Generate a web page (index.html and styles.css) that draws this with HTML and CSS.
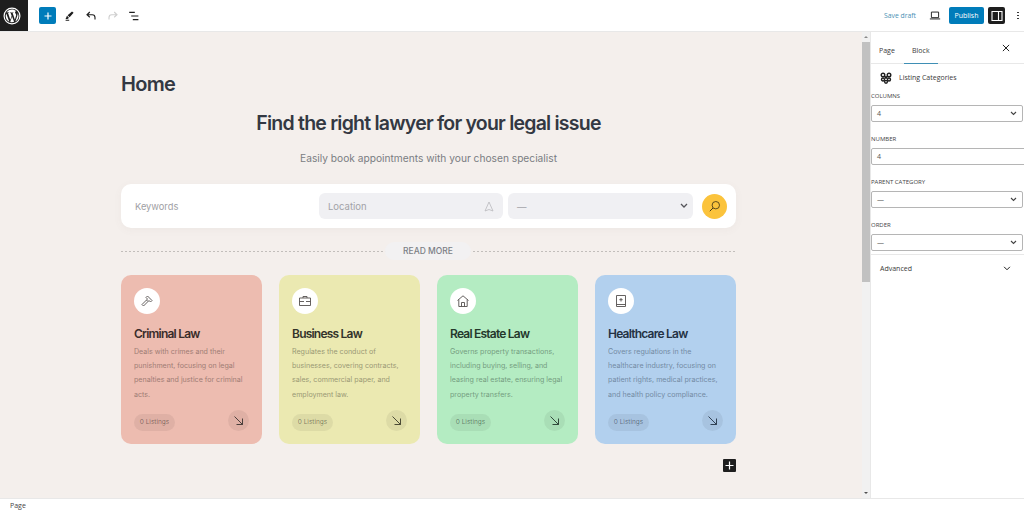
FILE: index.html
```html
<!DOCTYPE html>
<html lang="en">
<head>
    <meta charset="UTF-8">
    <title>Edit Page</title>
    <link rel="stylesheet" href="styles.css">
</head>
<body>
    <header class="topbar">
        <div class="wp-logo">
            <svg width="18" height="18" viewBox="0 0 20 20"><circle cx="10" cy="10" r="8.800" fill="none" stroke="#fff" stroke-width="1.300"/><path fill="#fff" d="M3 10c0 2.800 1.600 5.200 4 6.300L3.600 7.100C3.200 8 3 9 3 10zm11.700-.4c0-.9-.3-1.500-.6-2-.4-.6-.7-1.100-.7-1.700 0-.7.500-1.300 1.200-1.300h.1C13.500 3.500 11.800 2.800 10 2.800c-2.500 0-4.700 1.300-6 3.200h.5c.7 0 1.900-.1 1.900-.1.400 0 .4.500 0 .6 0 0-.4 0-.8.1l2.500 7.500 1.500-4.500-1.100-2.900c-.4 0-.7-.1-.7-.1-.4 0-.3-.6 0-.6 0 0 1.100.1 1.800.1s1.900-.1 1.900-.1c.4 0 .4.500 0 .6 0 0-.4 0-.8.1l2.500 7.400.7-2.300c.3-.9.500-1.600.500-2.100zM10.100 10.600l-2.100 6c.6.2 1.300.3 2 .3.800 0 1.600-.1 2.300-.4l-2.200-5.900zm6.100-4c0 .3.100.6.100 1 0 .7-.1 1.400-.5 2.400l-2.100 6.100c2.100-1.200 3.500-3.500 3.500-6.100 0-1.200-.3-2.400-1-3.400z"/></svg>
        </div>
        <div class="tools">
            <button class="add-btn">
                <svg width="14" height="14" viewBox="0 0 14 14"><path d="M7 3.500v7M3.500 7h7" stroke="#fff" stroke-width="1.200"/></svg>
            </button>
            <svg class="tool" width="16" height="16" viewBox="0 0 20 20"><path fill="#1e1e1e" d="M12.500 4.500 14.500 6l-5 5.500-2.500-2.500zM6.300 9.800l2.300 2.400c-.6 1.300-1.900 1.800-4.300 1.500 1.200-.9 1.100-2.900 2-3.900zM4.500 14.800h4.500v1H4.500z"/></svg>
            <svg class="tool" width="16" height="16" viewBox="0 0 20 20"><path fill="none" stroke="#1e1e1e" stroke-width="1.400" d="M8.500 5 5 8.500 8.500 11.500M5.500 8.500h6c2.200 0 3.500 1.500 3.500 3.500v2.500"/></svg>
            <svg class="tool" width="16" height="16" viewBox="0 0 20 20"><path fill="none" stroke="#cfcfcf" stroke-width="1.400" d="M11.500 5 15 8.500 11.500 11.500M14.500 8.500h-6C6.300 8.500 5 10 5 12v2.500"/></svg>
            <svg class="tool" width="16" height="16" viewBox="0 0 20 20"><path stroke="#1e1e1e" stroke-width="1.500" d="M4 5.500h7M6.500 10h9M8.500 14.500h7"/></svg>
        </div>
        <div class="actions">
            <span class="save-draft">Save draft</span>
            <svg class="preview" width="12" height="11" viewBox="0 0 14 12"><path fill="none" stroke="#1e1e1e" stroke-width="1.100" d="M2.800 2h8.400v6.500H2.800z"/><path stroke="#1e1e1e" stroke-width="1.100" d="M1 10h12"/></svg>
            <button class="publish">Publish</button>
            <button class="panel-btn">
                <svg width="12" height="12" viewBox="0 0 12 12"><path fill="none" stroke="#fff" stroke-width="1.100" d="M1 1.500h10v9H1zM7.500 1.500v9"/></svg>
            </button>
            <span class="more-dots"><i></i><i></i><i></i></span>
        </div>
    </header>

    <div class="workspace">
        <main class="canvas">
            <div class="page">
                <h1 class="page-title">Home</h1>
                <h2 class="hero-title">Find the right lawyer for your legal issue</h2>
                <p class="hero-sub">Easily book appointments with your chosen specialist</p>

                <div class="search">
                    <span class="keywords">Keywords</span>
                    <div class="field location">
                        <span>Location</span>
                        <svg width="10" height="11" viewBox="0 0 10 11"><path fill="none" stroke="#b9b9bd" stroke-width=".8" d="M5 1 1 10l4-1.500L9 10z"/></svg>
                    </div>
                    <div class="field category">
                        <span>—</span>
                        <svg width="8" height="6" viewBox="0 0 8 6"><path fill="none" stroke="#55555a" stroke-width="1.300" d="m1 1 3 3 3-3"/></svg>
                    </div>
                    <button class="search-btn">
                        <svg width="13" height="13" viewBox="0 0 13 13"><circle cx="7.800" cy="5.200" r="3.700" fill="none" stroke="#4a3c17" stroke-width=".9"/><path stroke="#4a3c17" stroke-width="1" d="M5 8 1.800 11.200"/></svg>
                    </button>
                </div>

                <div class="read-more"><span>READ MORE</span></div>

                <div class="cards">
                    <article class="card card-red">
                        <div class="card-icon">
                            <svg width="14" height="14" viewBox="0 0 14 14"><path fill="none" stroke="#55504f" stroke-width=".9" d="m7.500 2 4.500 4.500-1.500 1.500L9 6.500 8 7.500l-1.500-1.500 1-1-1.500-1.500zM6.500 6 2 10.500 3.500 12 8 7.500"/></svg>
                        </div>
                        <h3>Criminal Law</h3>
                        <p>Deals with crimes and their punishment, focusing on legal penalties and justice for criminal acts.</p>
                        <div class="card-foot">
                            <span class="count">0 Listings</span>
                            <span class="go"><svg width="11" height="11" viewBox="0 0 11 11"><path fill="none" stroke="#3a3230" stroke-width=".9" d="m1.500 1.500 8 8M9.500 3.500v6h-6"/></svg></span>
                        </div>
                    </article>
                    <article class="card card-yellow">
                        <div class="card-icon">
                            <svg width="14" height="14" viewBox="0 0 14 14"><path fill="none" stroke="#55504f" stroke-width=".9" d="M1.500 4h11v7.500h-11zM5 4V2.500h4V4M1.500 7.500h4.500M8 7.500h4.500"/></svg>
                        </div>
                        <h3>Business Law</h3>
                        <p>Regulates the conduct of businesses, covering contracts, sales, commercial paper, and employment law.</p>
                        <div class="card-foot">
                            <span class="count">0 Listings</span>
                            <span class="go"><svg width="11" height="11" viewBox="0 0 11 11"><path fill="none" stroke="#3a3a28" stroke-width=".9" d="m1.500 1.500 8 8M9.500 3.500v6h-6"/></svg></span>
                        </div>
                    </article>
                    <article class="card card-green">
                        <div class="card-icon">
                            <svg width="14" height="14" viewBox="0 0 14 14"><path fill="none" stroke="#55504f" stroke-width=".9" d="M1.500 6.500 7 1.800l5.500 4.700M2.800 5.500v7h8.400v-7M5.500 12.500V8.500h3v4"/></svg>
                        </div>
                        <h3>Real Estate Law</h3>
                        <p>Governs property transactions, including buying, selling, and leasing real estate, ensuring legal property transfers.</p>
                        <div class="card-foot">
                            <span class="count">0 Listings</span>
                            <span class="go"><svg width="11" height="11" viewBox="0 0 11 11"><path fill="none" stroke="#24382c" stroke-width=".9" d="m1.500 1.500 8 8M9.500 3.500v6h-6"/></svg></span>
                        </div>
                    </article>
                    <article class="card card-blue">
                        <div class="card-icon">
                            <svg width="14" height="14" viewBox="0 0 14 14"><path fill="none" stroke="#55504f" stroke-width=".9" d="M2.500 1.500h9v11h-9zM2.500 10.500h9"/><path stroke="#55504f" stroke-width=".9" d="M7 4v3.500M5.300 5.700h3.400"/></svg>
                        </div>
                        <h3>Healthcare Law</h3>
                        <p>Covers regulations in the healthcare industry, focusing on patient rights, medical practices, and health policy compliance.</p>
                        <div class="card-foot">
                            <span class="count">0 Listings</span>
                            <span class="go"><svg width="11" height="11" viewBox="0 0 11 11"><path fill="none" stroke="#243244" stroke-width=".9" d="m1.500 1.500 8 8M9.500 3.500v6h-6"/></svg></span>
                        </div>
                    </article>
                </div>

                <div class="block-add">
                    <button class="block-add-btn">
                        <svg width="9" height="9" viewBox="0 0 9 9"><path stroke="#fff" stroke-width="1.200" d="M4.500 .5v8M.5 4.500h8"/></svg>
                    </button>
                </div>
            </div>
        </main>

        <div class="scrollbar">
            <span class="arrow-up"></span>
            <div class="thumb"></div>
            <span class="arrow-down"></span>
        </div>

        <aside class="sidebar">
            <div class="tabs">
                <span class="tab">Page</span>
                <span class="tab active">Block</span>
                <svg class="close" width="8" height="8" viewBox="0 0 9 9"><path stroke="#1e1e1e" stroke-width="1.100" d="m1 1 7 7M8 1 1 8"/></svg>
            </div>
            <div class="block-name">
                <svg width="12" height="12" viewBox="0 0 12 12"><g fill="none" stroke="#1e1e1e" stroke-width="1.400"><circle cx="3" cy="3" r="1.800"/><circle cx="9" cy="3" r="1.800"/><circle cx="3" cy="7.500" r="1.500"/><circle cx="9" cy="7.500" r="1.500"/><circle cx="6" cy="9.800" r="1.400"/></g><circle cx="6" cy="5.500" r="1.400" fill="#1e1e1e"/></svg>
                <span>Listing Categories</span>
            </div>
            <div class="settings">
                <label>COLUMNS</label>
                <div class="control"><span>4</span><svg width="7" height="5" viewBox="0 0 7 5"><path fill="none" stroke="#444" stroke-width="1.100" d="m1 1 2.500 2.500L6 1"/></svg></div>
                <label>NUMBER</label>
                <div class="control wide"><span>4</span></div>
                <label>PARENT CATEGORY</label>
                <div class="control"><span>—</span><svg width="7" height="5" viewBox="0 0 7 5"><path fill="none" stroke="#444" stroke-width="1.100" d="m1 1 2.500 2.500L6 1"/></svg></div>
                <label>ORDER</label>
                <div class="control"><span>—</span><svg width="7" height="5" viewBox="0 0 7 5"><path fill="none" stroke="#444" stroke-width="1.100" d="m1 1 2.500 2.500L6 1"/></svg></div>
            </div>
            <div class="advanced">
                <span>Advanced</span>
                <svg width="8" height="5" viewBox="0 0 9 6"><path fill="none" stroke="#1e1e1e" stroke-width="1.200" d="m1 1 3.500 3.500L8 1"/></svg>
            </div>
        </aside>
    </div>

    <footer class="statusbar">Page</footer>
</body>
</html>
```

FILE: styles.css
```css
* {
    box-sizing: border-box;
}

html, body {
    height: 100%;
}

body {
    margin: 0;
    display: flex;
    flex-direction: column;
    width: 1024px;
    height: 512px;
    overflow: hidden;
    font-family: "Open Sans", sans-serif;
    color: #1e1e1e;
    background-color: #ffffff;
}

button {
    border: none;
    padding: 0;
    display: flex;
    align-items: center;
    justify-content: center;
}

/* top bar */
.topbar {
    flex: 0 0 31px;
    display: flex;
    align-items: center;
    border-bottom: 1px solid #e8e8e8;
}

.wp-logo {
    width: 28px;
    height: 31px;
    padding-right: 4px;
    background-color: #1e1e1e;
    display: flex;
    align-items: center;
    justify-content: center;
}

.tools {
    display: flex;
    align-items: center;
    margin-left: 11px;
    gap: 5.500px;
}

.add-btn {
    width: 17px;
    height: 17px;
    background-color: #007cba;
    border-radius: 2px;
}

.actions {
    margin-left: auto;
    display: flex;
    align-items: center;
}

.save-draft {
    font-size: 6.800px;
    color: #4a90b4;
    margin-right: 13px;
}

.preview {
    margin-right: 8px;
}

.publish {
    width: 35px;
    height: 17px;
    margin-right: 4px;
    background-color: #007cba;
    color: #ffffff;
    font-family: "Open Sans", sans-serif;
    font-size: 7px;
    border-radius: 2px;
}

.panel-btn {
    width: 17px;
    height: 17px;
    background-color: #1e1e1e;
    border-radius: 2px;
}

.more-dots {
    width: 12px;
    margin-left: 7px;
    display: flex;
    flex-direction: column;
    align-items: center;
    gap: 1.500px;
}

.more-dots i {
    width: 1.500px;
    height: 1.500px;
    border-radius: 50%;
    background-color: #1e1e1e;
}

/* main area */
.workspace {
    flex: 1;
    min-height: 0;
    display: flex;
}

.canvas {
    width: 862px;
    background-color: #f4efec;
    font-family: Inter, sans-serif;
}

.page {
    width: 615px;
    margin-left: 121px;
}

.page-title {
    margin: 40px 0 0;
    font-size: 20px;
    line-height: 24px;
    font-weight: 600;
    letter-spacing: -0.7px;
    color: #333842;
}

.hero-title {
    margin: 14px 0 0;
    text-align: center;
    font-size: 19.500px;
    line-height: 26px;
    font-weight: 600;
    letter-spacing: -0.78px;
    color: #333842;
}

.hero-sub {
    margin: 14px 0 0;
    text-align: center;
    font-size: 10.200px;
    line-height: 16px;
    color: #7a7d82;
}

.search {
    margin-top: 18px;
    height: 44px;
    padding: 0 9px 0 13px;
    display: flex;
    align-items: center;
    background-color: #ffffff;
    border-radius: 10px;
    box-shadow: 0 2px 8px rgba(120, 100, 90, 0.05);
}

.keywords {
    width: 185px;
    padding-left: 1px;
    font-size: 9.300px;
    color: #a0a0a4;
}

.field {
    height: 26px;
    display: flex;
    align-items: center;
    justify-content: space-between;
    padding: 0 9px;
    background-color: #f0f0f3;
    border-radius: 6px;
    font-size: 9.500px;
    color: #a2a2a7;
}

.location {
    width: 184px;
}

.category {
    width: 185px;
    margin-left: 5px;
    padding-right: 5px;
}

.search-btn {
    width: 25px;
    height: 25px;
    margin-left: 9px;
    border-radius: 50%;
    background-color: #fbc33c;
}

.read-more {
    margin-top: 14px;
    height: 18px;
    display: flex;
    align-items: center;
    justify-content: center;
    background-image: linear-gradient(to right, #c2bebb 60%, transparent 60%);
    background-size: 4px 1px;
    background-repeat: repeat-x;
    background-position: 0 center;
}

.read-more span {
    width: 86px;
    height: 18px;
    margin-left: -1px;
    text-align: center;
    font-size: 8.500px;
    font-weight: 500;
    line-height: 18px;
    color: #7c7f86;
    background-color: #f2f1f2;
    border-radius: 9px;
}

.cards {
    margin-top: 15px;
    display: grid;
    grid-template-columns: repeat(4, 141px);
    gap: 17px;
}

.card {
    height: 169px;
    padding: 13px;
    display: flex;
    flex-direction: column;
    border-radius: 10px;
}

.card-red { background-color: #edbcb0; color: #3a2c2a; }
.card-yellow { background-color: #ebe9b1; color: #33332a; }
.card-green { background-color: #b4ecc2; color: #24382c; }
.card-blue { background-color: #b2d0ee; color: #243244; }

.card-icon {
    width: 26px;
    height: 26px;
    display: flex;
    align-items: center;
    justify-content: center;
    background-color: #ffffff;
    border-radius: 50%;
}

.card h3 {
    margin: 11.500px 0 0;
    font-size: 12px;
    line-height: 16px;
    font-weight: 600;
    letter-spacing: -0.78px;
}

.card p {
    margin: 3.500px 0 0;
    height: 57px;
    font-size: 7.100px;
    line-height: 14.200px;
    opacity: 0.45;
}

.card-foot {
    margin-top: auto;
    display: flex;
    align-items: flex-end;
    justify-content: space-between;
}

.count {
    width: 41px;
    height: 17px;
    text-align: center;
    font-size: 6.500px;
    line-height: 17px;
    border-radius: 9px;
    color: rgba(0, 0, 0, 0.45);
    background-color: rgba(0, 0, 0, 0.06);
}

.go {
    width: 21px;
    height: 21px;
    display: flex;
    align-items: center;
    justify-content: center;
    border-radius: 50%;
    background-color: rgba(0, 0, 0, 0.06);
}

.block-add {
    margin-top: 15px;
    display: flex;
    justify-content: flex-end;
}

.block-add-btn {
    width: 13px;
    height: 13px;
    background-color: #1e1e1e;
    border-radius: 1px;
}

/* scrollbar */
.scrollbar {
    width: 8px;
    display: flex;
    flex-direction: column;
    background-color: #f1f1f1;
}

.arrow-up {
    height: 10px;
    position: relative;
}

.arrow-up::after, .arrow-down::after {
    content: "";
    position: absolute;
    left: 2px;
    border-left: 2px solid transparent;
    border-right: 2px solid transparent;
}

.arrow-up::after {
    top: 4px;
    border-bottom: 2px solid #8a8a8a;
}

.thumb {
    height: 240px;
    background-color: #c1c1c1;
}

.arrow-down {
    margin-top: auto;
    height: 10px;
    position: relative;
}

.arrow-down::after {
    top: 4px;
    border-top: 2px solid #505050;
}

/* sidebar */
.sidebar {
    width: 154px;
    overflow: hidden;
    border-left: 1px solid #e8e8e8;
    background-color: #ffffff;
}

.tabs {
    height: 32px;
    display: flex;
    align-items: center;
    padding-left: 8px;
    border-bottom: 1px solid #e8e8e8;
}

.tab {
    height: 32px;
    padding: 0 8px 0 0;
    line-height: 38px;
    font-size: 7px;
    font-weight: 500;
    color: #3a3a3a;
}

.tab.active {
    width: 34px;
    margin-left: 1px;
    padding: 0;
    text-align: center;
    border-bottom: 1.500px solid #3f8fb5;
}

.close {
    margin-left: auto;
    margin-right: 14px;
}

.block-name {
    height: 27px;
    display: flex;
    align-items: center;
    padding-left: 9px;
    gap: 7px;
    font-size: 7px;
    font-weight: 500;
    color: #3a3a3a;
}

.settings {
    display: flex;
    flex-direction: column;
}

.settings label {
    height: 11px;
    line-height: 11px;
    font-size: 6px;
    color: #444444;
}

.control {
    width: 152px;
    height: 17px;
    margin-top: 3px;
    margin-bottom: 12px;
    display: flex;
    align-items: center;
    justify-content: space-between;
    padding: 0 5px;
    border: 1px solid #b5b5b5;
    border-radius: 2px;
    font-size: 7px;
    color: #555555;
}

.control.wide {
    width: 160px;
}

.advanced {
    height: 28px;
    margin-top: -9px;
    padding: 0 13px 0 9px;
    display: flex;
    align-items: center;
    justify-content: space-between;
    border-top: 1px solid #e8e8e8;
    font-size: 7px;
    font-weight: 500;
    color: #3a3a3a;
}

/* status bar */
.statusbar {
    flex: 0 0 13px;
    padding-left: 10px;
    padding-top: 1px;
    border-top: 1px solid #e8e8e8;
    font-size: 7px;
    line-height: 12px;
    color: #444444;
}
```
